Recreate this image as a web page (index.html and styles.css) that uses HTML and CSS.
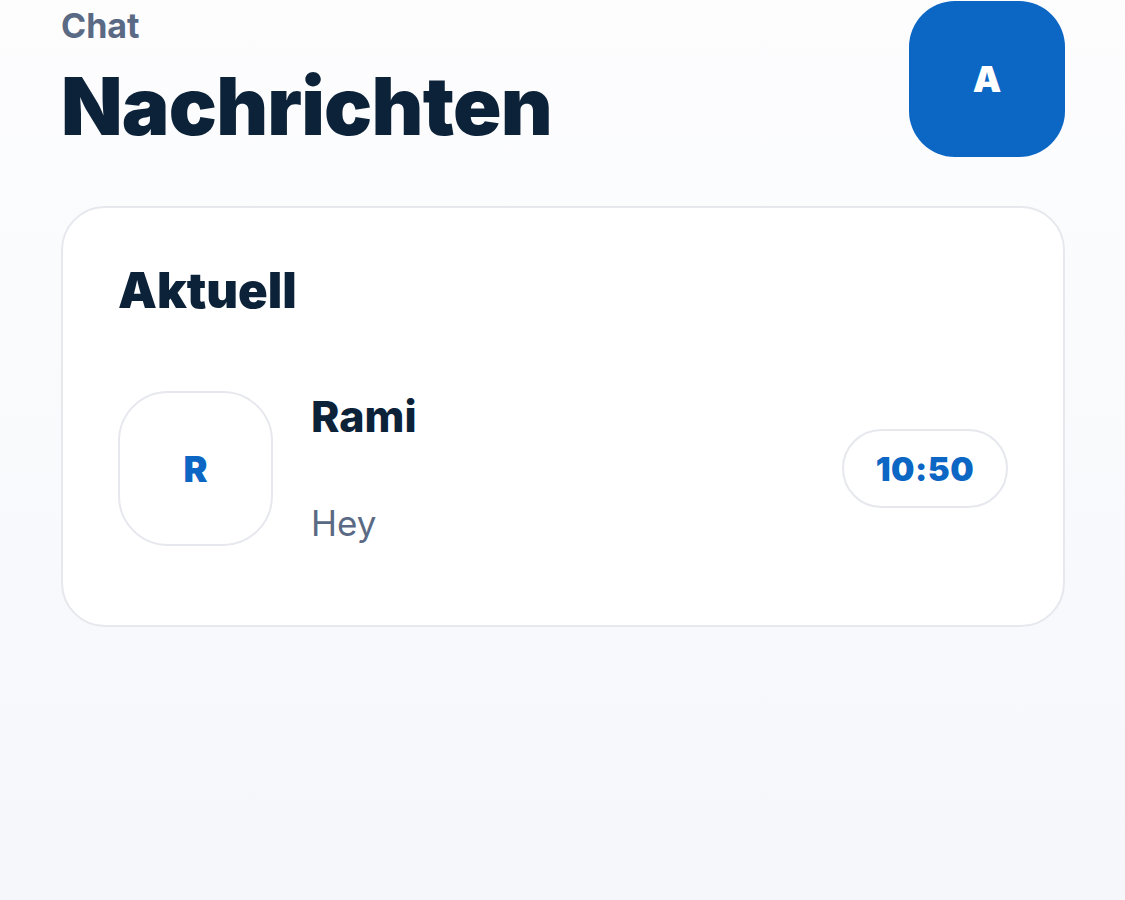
FILE: index.html
```html
<!DOCTYPE html>
<html lang="de">
<head>
<meta charset="utf-8">
<title>Nachrichten</title>
<link rel="stylesheet" href="styles.css">
</head>
<body>
<div class="screen">
  <header class="header">
    <div class="titles">
      <div class="eyebrow">Chat</div>
      <h1 class="title">Nachrichten</h1>
    </div>
    <div class="me-avatar">A</div>
  </header>
  <section class="card">
    <h2 class="card-title">Aktuell</h2>
    <div class="chat-row">
      <div class="chat-avatar">R</div>
      <div class="chat-text">
        <div class="chat-name">Rami</div>
        <div class="chat-preview">Hey</div>
      </div>
      <div class="chat-time">10:50</div>
    </div>
  </section>
</div>
</body>
</html>
```

FILE: styles.css
```css
* { box-sizing: border-box; }
html, body { margin: 0; padding: 0; }
body {
  width: 1125px;
  min-height: 900px;
  background: linear-gradient(180deg, #fdfdfe 0%, #f5f7fb 100%);
  font-family: Inter, "Noto Sans", sans-serif;
  color: #0c2238;
}
.screen {
  padding: 1px 60px 0 61px;
}
.header {
  display: flex;
  justify-content: space-between;
  align-items: flex-start;
}
.eyebrow {
  font-size: 34px;
  font-weight: 700;
  color: #5a6a84;
  line-height: 40px;
  margin-top: 5px;
}
.title {
  margin: 12px 0 0 0;
  font-size: 80px;
  font-weight: 900;
  letter-spacing: -0.8px;
  line-height: 96px;
  color: #0c2238;
}
.me-avatar {
  width: 156px;
  height: 156px;
  border-radius: 46px;
  background: #0b66c4;
  color: #fff;
  font-size: 36px;
  font-weight: 900;
  display: flex;
  align-items: center;
  justify-content: center;
}
.card {
  margin-top: 49px;
  border: 2px solid #e6e8ee;
  border-radius: 44px;
  background: #ffffff;
  padding: 54px 55px 79px 55px;
}
.card-title {
  margin: 0;
  font-size: 49px;
  font-weight: 900;
  line-height: 58px;
  color: #0c2238;
}
.chat-row {
  margin-top: 71px;
  display: flex;
  align-items: center;
}
.chat-avatar {
  width: 155px;
  height: 155px;
  flex: none;
  border: 2px solid #e6e8ee;
  border-radius: 50px;
  background: #fff;
  color: #0b66c4;
  font-size: 36px;
  font-weight: 900;
  display: flex;
  align-items: center;
  justify-content: center;
}
.chat-text {
  flex: 1;
  margin-left: 38px;
  height: 155px;
  display: flex;
  flex-direction: column;
  justify-content: space-between;
}
.chat-name {
  font-size: 43px;
  font-weight: 800;
  line-height: 50px;
  color: #0c2238;
}
.chat-preview {
  font-size: 35px;
  font-weight: 400;
  line-height: 42px;
  color: #5a6a84;
  margin-bottom: 2px;
}
.chat-time {
  flex: none;
  width: 166px;
  height: 79px;
  border: 2px solid #e6e8ee;
  border-radius: 40px;
  display: flex;
  align-items: center;
  justify-content: center;
  color: #0b66c4;
  font-size: 33px;
  font-weight: 900;
  letter-spacing: 0.5px;
}
```
